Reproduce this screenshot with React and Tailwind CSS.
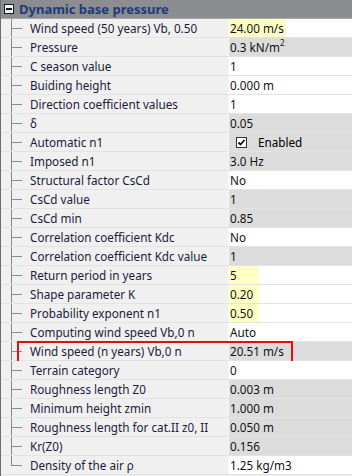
import React from 'react';

const rows = [
    { label: 'Wind speed (50 years) Vb, 0.50', value: '24.00 m/s', bg: 'white', mark: true },
    { label: 'Pressure', value: <>0.3 kN/m<sup className="text-[8px]">2</sup></>, bg: 'gray' },
    { label: 'C season value', value: '1', bg: 'white' },
    { label: 'Buiding height', value: '0.000 m', bg: 'white' },
    { label: 'Direction coefficient values', value: '1', bg: 'white' },
    { label: 'δ', value: '0.05', bg: 'gray' },
    { label: 'Automatic n1', value: 'check', bg: 'gray' },
    { label: 'Imposed n1', value: '3.0 Hz', bg: 'gray' },
    { label: 'Structural factor CsCd', value: 'No', bg: 'white' },
    { label: 'CsCd value', value: '1', bg: 'gray' },
    { label: 'CsCd min', value: '0.85', bg: 'gray' },
    { label: 'Correlation coefficient Kdc', value: 'No', bg: 'white' },
    { label: 'Correlation coefficient Kdc value', value: '1', bg: 'gray' },
    { label: 'Return period in years', value: '5', bg: 'white', mark: true },
    { label: 'Shape parameter K', value: '0.20', bg: 'white', mark: true },
    { label: 'Probability exponent n1', value: '0.50', bg: 'white', mark: true },
    { label: 'Computing wind speed Vb,0 n', value: 'Auto', bg: 'white' },
    { label: 'Wind speed (n years) Vb,0 n', value: '20.51 m/s', bg: 'gray', boxed: true },
    { label: 'Terrain category', value: '0', bg: 'white' },
    { label: 'Roughness length Z0', value: '0.003 m', bg: 'gray' },
    { label: 'Minimum height zmin', value: '1.000 m', bg: 'gray' },
    { label: 'Roughness length for cat.II z0, II', value: '0.050 m', bg: 'gray' },
    { label: 'Kr(Z0)', value: '0.156', bg: 'gray' },
    { label: 'Density of the air ρ', value: '1.25 kg/m3', bg: 'white' },
];

const CheckValue = () => (
    <div className="flex items-center">
        <span className="ml-[7px] w-[11px] h-[11px] border border-[#333] bg-white flex items-center justify-center">
            <svg width="9" height="9" viewBox="0 0 9 9">
                <path d="M1.5 4.5 L3.5 6.5 L7.5 2" stroke="#111" strokeWidth="1.8" fill="none" />
            </svg>
        </span>
        <span className="ml-[11px]">Enabled</span>
    </div>
);

const Row = ({ row, last }) => {
    return (
        <div className="relative flex h-[19px] border-b border-[#e3e3e3]">
            <div className="relative w-[228px] shrink-0 flex items-center bg-[#f0f0f0] border-r border-[#f7f7f7] overflow-hidden">
                <div className="relative w-[29px] h-full shrink-0">
                    <span className={`absolute left-[10px] top-0 w-px bg-[#8a8a8a] ${last ? 'h-[10px]' : 'h-[20px]'}`} />
                    <span className="absolute left-[10px] top-[9px] w-[11px] h-px bg-[#8a8a8a]" />
                </div>
                <span className="whitespace-nowrap text-[#1b1b3a]">{row.label}</span>
            </div>
            <div className={`flex-1 flex items-stretch ${row.bg === 'gray' ? 'bg-[#dcdcdc]' : 'bg-white'}`}>
                {row.value === 'check' ? (
                    <CheckValue />
                ) : (
                    <span className={`flex items-center pl-px pr-[2px] min-w-[30px] text-[#111] ${row.mark ? 'bg-[#ffffc4]' : ''}`}>
                        {row.value}
                    </span>
                )}
            </div>
            {row.boxed && (
                <span className="absolute left-[16px] top-[-1px] w-[276px] h-[22px] border-2 border-[#e01010] pointer-events-none" />
            )}
        </div>
    );
};

export default function App() {
    return (
        <div className="w-[352px] h-[476px] overflow-hidden bg-[#f0f0f0] border-l border-[#6e6e6e] text-[11.7px] leading-[18px]" style={{ fontFamily: '"Noto Sans", "Liberation Sans", sans-serif' }}>
            <div className="flex items-center h-[19px] bg-[#8b8d90] border-b border-[#a8a8a8]">
                <span className="ml-[3px] w-[10px] h-[10px] border border-[#1a1a1a] bg-[#f4f4f4] flex items-center justify-center">
                    <span className="w-[6px] h-[2px] bg-[#1a1a1a]" />
                </span>
                <span className="ml-[5px] font-bold text-[13px] text-[#1f3a7a]">Dynamic base pressure</span>
            </div>
            {rows.map((row, i) => (
                <Row key={i} row={row} last={i === rows.length - 1} />
            ))}
        </div>
    );
}
